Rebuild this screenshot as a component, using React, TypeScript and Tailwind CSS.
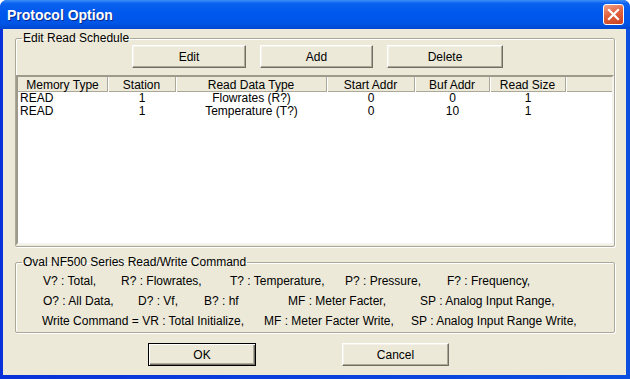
import React from "react";

const btn3d =
  "h-[23px] flex items-center justify-center bg-[#ECE9D8] border border-t-white border-l-white border-r-[#716f64] border-b-[#716f64] shadow-[inset_-1px_-1px_0_#aca899,inset_1px_1px_0_#f4f2ea] text-[12px] text-black";

const btnDefault =
  "h-[23px] flex items-center justify-center bg-[#ECE9D8] border border-black shadow-[inset_1px_1px_0_#fff,inset_-1px_-1px_0_#716f64,inset_-2px_-2px_0_#aca899] text-[12px] text-black";

const cols = [
  { label: "Memory Type", w: 90 },
  { label: "Station", w: 68 },
  { label: "Read Data Type", w: 151 },
  { label: "Start Addr", w: 88 },
  { label: "Buf Addr", w: 75 },
  { label: "Read Size", w: 76 },
];

const rows = [
  ["READ", "1", "Flowrates (R?)", "0", "0", "1"],
  ["READ", "1", "Temperature (T?)", "0", "10", "1"],
];

function GroupBox({ label, children, className }: { label: string; children: React.ReactNode; className?: string }) {
  return (
    <fieldset
      className={
        "w-[600px] border border-[#aca899] rounded-[2px] shadow-[inset_1px_1px_0_#fff,1px_1px_0_#fff] m-0 p-0 " +
        (className ?? "")
      }
    >
      <legend className="ml-[6px] px-[1px] leading-[14px] text-[12px] text-black">{label}</legend>
      {children}
    </fieldset>
  );
}

export default function App() {
  return (
    <div className="w-[630px] h-[379px] bg-white font-['Liberation_Sans',Arial,sans-serif]">
      <div className="w-[630px] h-[379px] flex flex-col bg-[#0a47d8] rounded-t-[7px] overflow-hidden">
        {/* Title bar */}
        <div className="h-[29px] shrink-0 flex items-center pl-[7px] pr-[6px] bg-[linear-gradient(180deg,#3d8ff7_0%,#0a62ee_12%,#0058ee_45%,#0055e6_80%,#0047d0_100%)]">
          <span className="text-white font-bold text-[14px] leading-[16px] [text-shadow:1px_1px_0_#0a2a8a]">
            Protocol Option
          </span>
          <div className="ml-auto w-[21px] h-[21px] rounded-[3px] border border-white bg-[linear-gradient(160deg,#f0a38a_0%,#e2633f_45%,#c8401f_100%)] flex items-center justify-center">
            <svg width="13" height="13" viewBox="0 0 13 13">
              <path d="M2 2 L11 11 M11 2 L2 11" stroke="#fff" strokeWidth="2.2" strokeLinecap="square" />
            </svg>
          </div>
        </div>

        {/* Frame body */}
        <div className="flex-1 flex pl-[3px] pr-[4px] pb-[4px] bg-[linear-gradient(90deg,#0831d9_0%,#0a4fe0_100%)]">
          <div className="flex-1 bg-[#ECE9D8] pl-[12px] pt-[2px] flex flex-col text-[12px] text-black">
            {/* Group 1 */}
            <GroupBox label="Edit Read Schedule" className="pb-[1px]">
              <div className="flex h-[23px] pl-[116px]">
                <button className={btn3d + " w-[114px]"}>Edit</button>
                <button className={btn3d + " w-[113px] ml-[14px]"}>Add</button>
                <button className={btn3d + " w-[116px] ml-[14px]"}>Delete</button>
              </div>
              <div className="mt-[7px] h-[170px] bg-white border-2 border-t-[#9d9a8c] border-l-[#9d9a8c] border-r-[#f4f3ee] border-b-[#f4f3ee] flex flex-col">
                <div className="flex h-[15px] bg-[#ECE9D8] shadow-[inset_0_-1px_0_#aca899]">
                  {cols.map((c) => (
                    <div
                      key={c.label}
                      style={{ width: c.w }}
                      className="h-[15px] flex items-center justify-center leading-[14px] border-r border-r-[#aca899] shadow-[1px_0_0_#fff] shrink-0"
                    >
                      {c.label}
                    </div>
                  ))}
                  <div className="flex-1" />
                </div>
                {rows.map((r, i) => (
                  <div key={i} className="flex h-[13px] leading-[13px]">
                    {r.map((v, j) => (
                      <div
                        key={j}
                        style={{ width: cols[j].w }}
                        className={"shrink-0 " + (j === 0 ? "pl-[2px] text-left" : "text-center")}
                      >
                        {v}
                      </div>
                    ))}
                  </div>
                ))}
              </div>
            </GroupBox>

            {/* Group 2 */}
            <GroupBox label="Oval NF500 Series Read/Write Command" className="mt-[8px] pt-[2px] pb-[1px]">
              <div className="grid grid-cols-[27px_78px_109px_115px_102px_1fr] h-[20px] items-center whitespace-nowrap">
                <span />
                <span>V? : Total,</span>
                <span>R? : Flowrates,</span>
                <span>T? : Temperature,</span>
                <span>P? : Pressure,</span>
                <span>F? : Frequency,</span>
              </div>
              <div className="grid grid-cols-[27px_95px_66px_84px_132px_1fr] h-[20px] items-center whitespace-nowrap">
                <span />
                <span>O? : All Data,</span>
                <span>D? : Vf,</span>
                <span>B? : hf</span>
                <span>MF : Meter Facter,</span>
                <span>SP : Analog Input Range,</span>
              </div>
              <div className="grid grid-cols-[26px_222px_147px_1fr] h-[20px] items-center whitespace-nowrap">
                <span />
                <span>Write Command = VR : Total Initialize,</span>
                <span>MF : Meter Facter Write,</span>
                <span>SP : Analog Input Range Write,</span>
              </div>
            </GroupBox>

            <div className="flex mt-[10px] pl-[133px]">
              <button className={btnDefault + " w-[108px]"}>OK</button>
              <button className={btn3d + " w-[107px] ml-[86px]"}>Cancel</button>
            </div>
          </div>
        </div>
      </div>
    </div>
  );
}
